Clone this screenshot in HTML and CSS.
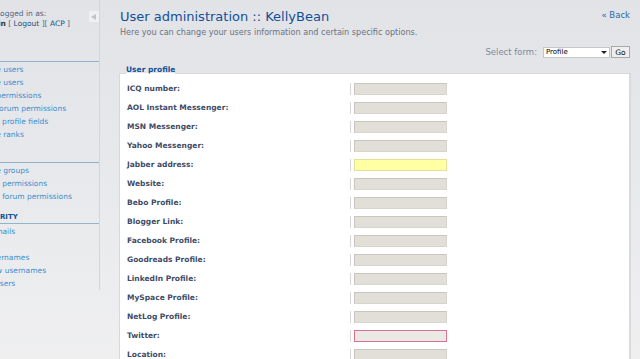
FILE: index.html
```html
<!DOCTYPE html>
<html lang="en">
<head>
    <meta charset="UTF-8">
    <meta name="viewport" content="width=device-width, initial-scale=1.0">
    <title>User administration</title>
    <link rel="stylesheet" href="styles.css">
</head>
<body>
<div class="page">
    <div class="sidebar">
        <button class="toggle" type="button" title="Hide menu"><span class="arrow"></span></button>
        <p class="login">
            <span class="login-label">Logged in as:</span>
            <span class="login-user"><strong>Admin</strong> [ <a href="#">Logout</a> ][ <a href="#">ACP</a> ]</span>
        </p>

        <div class="menu-block">
            <h3>Users</h3>
            <ul>
                <li><a href="#">Manage users</a></li>
                <li><a href="#">Inactive users</a></li>
                <li><a href="#">Users' permissions</a></li>
                <li><a href="#">Users' forum permissions</a></li>
                <li><a href="#">Custom profile fields</a></li>
                <li><a href="#">Manage ranks</a></li>
            </ul>
        </div>

        <div class="menu-block">
            <h3>Groups</h3>
            <ul>
                <li><a href="#">Manage groups</a></li>
                <li><a href="#">Groups' permissions</a></li>
                <li><a href="#">Groups' forum permissions</a></li>
            </ul>
        </div>

        <div class="menu-block">
            <h3>User security</h3>
            <ul>
                <li><a href="#">Ban e-mails</a></li>
                <li><a href="#">Ban IPs</a></li>
                <li><a href="#">Ban usernames</a></li>
                <li><a href="#">Disallow usernames</a></li>
                <li><a href="#">Prune users</a></li>
            </ul>
        </div>
    </div>

    <div class="main">
        <a href="#" class="back">&laquo; Back</a>
        <h1>User administration :: KellyBean</h1>
        <p class="intro">Here you can change your users information and certain specific options.</p>

        <form class="select-form">
            <label for="mode">Select form:</label>
            <span class="select-wrap">
                <select id="mode" name="mode">
                    <option>Profile</option>
                </select>
            </span>
            <button type="submit">Go</button>
        </form>

        <form id="profile-form">
            <fieldset>
                <legend>User profile</legend>
                <dl><dt><label for="icq">ICQ number:</label></dt><dd><input type="text" id="icq"></dd></dl>
                <dl><dt><label for="aim">AOL Instant Messenger:</label></dt><dd><input type="text" id="aim"></dd></dl>
                <dl><dt><label for="msn">MSN Messenger:</label></dt><dd><input type="text" id="msn"></dd></dl>
                <dl><dt><label for="yim">Yahoo Messenger:</label></dt><dd><input type="text" id="yim"></dd></dl>
                <dl><dt><label for="jabber">Jabber address:</label></dt><dd><input type="text" id="jabber" class="hover"></dd></dl>
                <dl><dt><label for="website">Website:</label></dt><dd><input type="text" id="website"></dd></dl>
                <dl><dt><label for="bebo">Bebo Profile:</label></dt><dd><input type="text" id="bebo"></dd></dl>
                <dl><dt><label for="blogger">Blogger Link:</label></dt><dd><input type="text" id="blogger"></dd></dl>
                <dl><dt><label for="facebook">Facebook Profile:</label></dt><dd><input type="text" id="facebook"></dd></dl>
                <dl><dt><label for="goodreads">Goodreads Profile:</label></dt><dd><input type="text" id="goodreads"></dd></dl>
                <dl><dt><label for="linkedin">LinkedIn Profile:</label></dt><dd><input type="text" id="linkedin"></dd></dl>
                <dl><dt><label for="myspace">MySpace Profile:</label></dt><dd><input type="text" id="myspace"></dd></dl>
                <dl><dt><label for="netlog">NetLog Profile:</label></dt><dd><input type="text" id="netlog"></dd></dl>
                <dl><dt><label for="twitter">Twitter:</label></dt><dd><input type="text" id="twitter" class="focus"></dd></dl>
                <dl><dt><label for="location">Location:</label></dt><dd><input type="text" id="location"></dd></dl>
                <dl><dt><label for="occupation">Occupation:</label></dt><dd><input type="text" id="occupation"></dd></dl>
            </fieldset>
        </form>
    </div>
</div>
</body>
</html>
```

FILE: styles.css
```css
html, body {
    overflow: hidden;
}
body {
    margin: 0;
    min-height: 100vh;
    background: linear-gradient(#e1e3e7, #f0f0f1);
    font-family: "DejaVu Sans", Verdana, sans-serif;
    color: #536482;
}
a {
    text-decoration: none;
}
.page {
    display: flex;
    align-items: flex-start;
    margin-left: -129px;
}

/* left menu, scrolled partly out of view */
.sidebar {
    position: relative;
    flex: none;
    width: 228px;
    border-right: 1px solid #d2d5d9;
}
.toggle {
    position: absolute;
    top: 11px;
    right: 0;
    width: 10px;
    height: 11px;
    padding: 0;
    border: none;
    background-color: #eef0f2;
}
.toggle .arrow {
    display: block;
    width: 0;
    height: 0;
    margin: 0 0 0 2px;
    border-top: 3px solid transparent;
    border-bottom: 3px solid transparent;
    border-right: 5px solid #bcc3ca;
}
.login {
    margin: 0;
    padding-top: 9px;
    font-size: 7.5px;
    line-height: 10px;
}
.login span {
    display: block;
}
.login-label {
    padding-left: 125px;
}
.login-user {
    padding-left: 108px;
}
.login strong {
    color: #333;
}
.login a {
    color: #105289;
}
.menu-block {
    margin-top: 8.5px;
}
.menu-block:first-of-type {
    margin-top: 20px;
}
.menu-block h3 {
    margin: 0;
    padding-left: 85px;
    font-size: 7px;
    line-height: 12px;
    text-transform: uppercase;
    color: #115098;
    border-bottom: 1px solid #93b3cb;
}
.menu-block ul {
    list-style: none;
    margin: 0;
    padding: 1px 0 0 100px;
}
.menu-block li {
    font-size: 7.5px;
    line-height: 13px;
    white-space: nowrap;
}
.menu-block a {
    color: #3b8dcf;
}

/* main column */
.main {
    flex: 1;
    padding: 0 9px 0 19px;
}
.back {
    float: right;
    margin: 10px 1px 0 0;
    font-size: 8.5px;
    line-height: 10px;
    color: #2a69ad;
}
h1 {
    margin: 9px 0 0 1px;
    font-size: 13px;
    font-weight: normal;
    line-height: 16px;
    color: #115098;
}
.intro {
    margin: 2px 0 0 1px;
    font-size: 8.1px;
    line-height: 10px;
    color: #6a7282;
}
.select-form {
    display: flex;
    justify-content: flex-end;
    align-items: center;
    height: 12px;
    margin: 9px 1px 0 0;
}
.select-form label {
    margin-right: 6px;
    font-size: 8.5px;
    color: #7f899b;
}
.select-wrap {
    position: relative;
    display: block;
}
.select-wrap::after {
    content: "";
    position: absolute;
    top: 4px;
    right: 4px;
    border-left: 3px solid transparent;
    border-right: 3px solid transparent;
    border-top: 3px solid #222;
}
.select-form select {
    display: block;
    width: 67px;
    height: 11px;
    padding: 0 0 0 2px;
    margin-right: 1px;
    border: 1px solid #c6c6c6;
    border-radius: 0;
    appearance: none;
    background-color: white;
    font-family: "DejaVu Sans", Verdana, sans-serif;
    font-size: 7px;
    color: #000;
}
.select-form button {
    width: 19px;
    height: 12px;
    padding: 0;
    border: 1px solid #a9a9a9;
    background-color: #efefef;
    font-family: "DejaVu Sans", Verdana, sans-serif;
    font-size: 7.5px;
    color: #000;
}
fieldset {
    margin: 8px 0 0 0;
    padding: 0 0 0 6px;
    background-color: white;
    border: 1px solid #d8d8d8;
    border-right: 2px solid #dadada;
}
legend {
    padding: 0 0 6px 0;
    font-size: 7.5px;
    font-weight: bold;
    line-height: 8px;
    color: #115098;
}
fieldset dl:first-of-type {
    margin-top: -1px;
}
dl {
    display: flex;
    align-items: center;
    height: 19px;
    margin: 0;
}
dt {
    width: 223px;
    padding-left: 1px;
    font-size: 7.5px;
    font-weight: bold;
    color: #3e4c66;
}
dd {
    margin: 0;
    padding-left: 3px;
    border-left: 1px solid #d6d6d6;
    height: 12px;
}
input {
    display: block;
    width: 93px;
    height: 12px;
    box-sizing: border-box;
    padding: 0;
    border: 1px solid #cac5be;
    border-right-color: #d8d4ce;
    border-bottom-color: #d8d4ce;
    background-color: #e2dfd9;
}
input.hover {
    border-color: #e3df96;
    background-color: #ffffa3;
}
input.focus {
    border-color: #d8728f;
    background-color: #ebe9e5;
}
```
